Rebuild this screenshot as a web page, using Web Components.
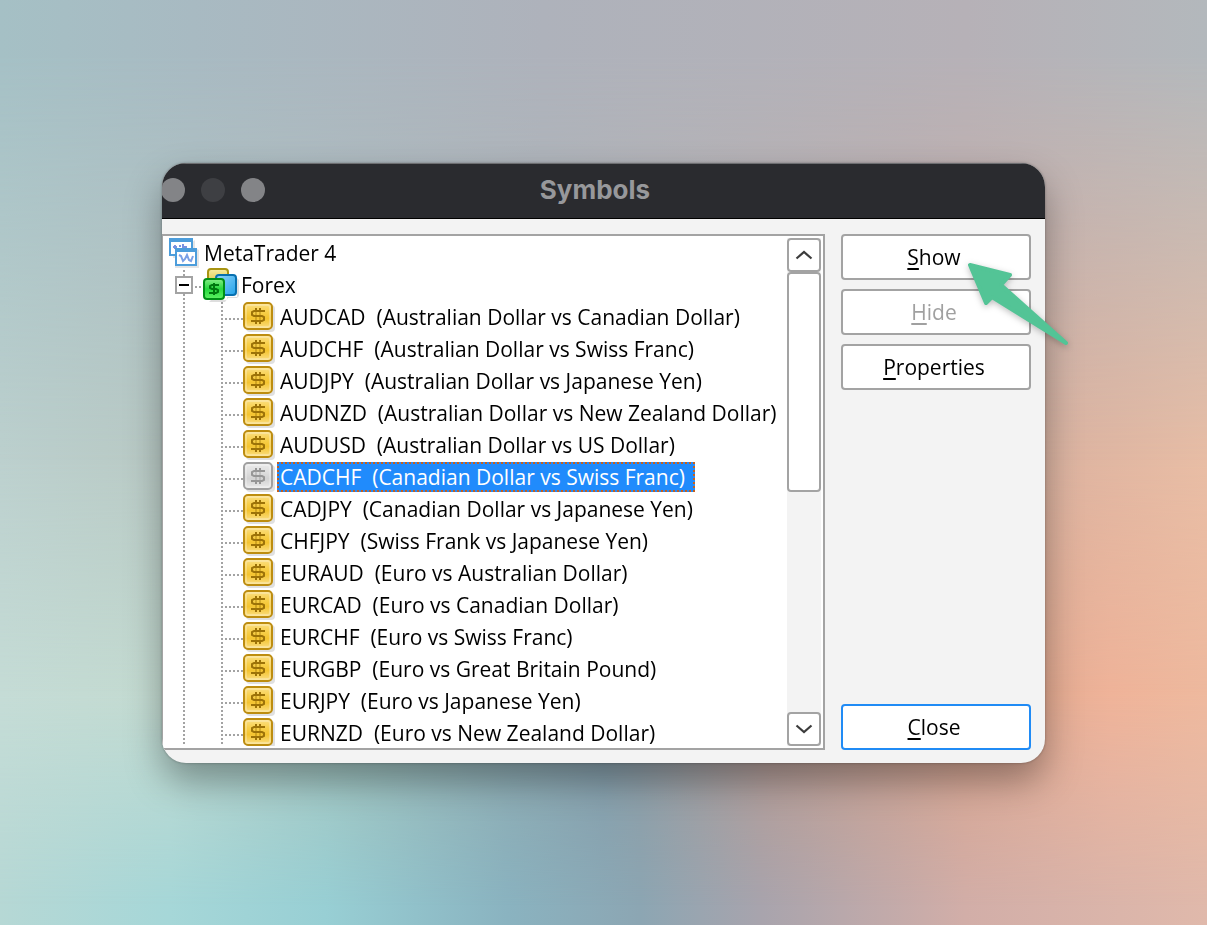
<!DOCTYPE html>
<html lang="en">
<head>
<meta charset="utf-8">
<title>Symbols</title>
<style>
    body
    {
        margin: 0;
        min-height: 100vh;
        display: flex;
        align-items: center;
        font-family: "Open Sans", "Noto Sans", sans-serif;
        font-size: 21px;
        color: #000;
    }
</style>
</head>
<body>

<soft-wallpaper></soft-wallpaper>

<symbols-window caption="Symbols">
    <symbol-tree slot="tree">
        <tree-row kind="root">MetaTrader 4</tree-row>
        <tree-row kind="group">Forex</tree-row>
        <tree-row>AUDCAD  (Australian Dollar vs Canadian Dollar)</tree-row>
        <tree-row>AUDCHF  (Australian Dollar vs Swiss Franc)</tree-row>
        <tree-row>AUDJPY  (Australian Dollar vs Japanese Yen)</tree-row>
        <tree-row>AUDNZD  (Australian Dollar vs New Zealand Dollar)</tree-row>
        <tree-row>AUDUSD  (Australian Dollar vs US Dollar)</tree-row>
        <tree-row selected>CADCHF  (Canadian Dollar vs Swiss Franc)</tree-row>
        <tree-row>CADJPY  (Canadian Dollar vs Japanese Yen)</tree-row>
        <tree-row>CHFJPY  (Swiss Frank vs Japanese Yen)</tree-row>
        <tree-row>EURAUD  (Euro vs Australian Dollar)</tree-row>
        <tree-row>EURCAD  (Euro vs Canadian Dollar)</tree-row>
        <tree-row>EURCHF  (Euro vs Swiss Franc)</tree-row>
        <tree-row>EURGBP  (Euro vs Great Britain Pound)</tree-row>
        <tree-row>EURJPY  (Euro vs Japanese Yen)</tree-row>
        <tree-row>EURNZD  (Euro vs New Zealand Dollar)</tree-row>
    </symbol-tree>
    <push-button slot="actions"><u>S</u>how</push-button>
    <push-button slot="actions" disabled><u>H</u>ide</push-button>
    <push-button slot="actions"><u>P</u>roperties</push-button>
    <push-button slot="footer" default><u>C</u>lose</push-button>
    <pointer-arrow slot="pointer"></pointer-arrow>
</symbols-window>

<script>
class SoftWallpaper extends HTMLElement
{
    constructor()
    {
        super();

        this.dom = this.attachShadow({mode: 'open'});

        // each band fades out into the one below it
        this.dom.innerHTML = `

            <style>

                :host
                {
                    display: grid;
                    position: fixed;
                    inset: 0;
                    z-index: -1;
                }

                div
                {
                    grid-area: 1 / 1;
                }

                .base
                {
                    background: linear-gradient(90deg, #b6d8d5, #a6d7d8 14%, #98cfd4 27%, #8ab3c0 42%, #8ca6b3 53%, #a8a4ad 63%, #d2aea8 80%, #e0b9ab);
                }

                .low
                {
                    background: linear-gradient(90deg, #c5dcd6, #c3dad0 14%, #a3bfb8 30%, #8399a5 50%, #b99a8e 64%, #d9a48c 80%, #efb399 92%, #eeb99e);
                    mask-image: linear-gradient(#000 75%, transparent 98%);
                }

                .middle
                {
                    background: linear-gradient(90deg, #bcd0ce, #b9cac5 13%, #b0b8b8 45%, #c9aea5 75%, #dfb5a1 90%, #e8bda5);
                    mask-image: linear-gradient(#000 50%, transparent 75%);
                }

                .top
                {
                    background: linear-gradient(90deg, #a5c0c5, #a8bac2 16%, #aeb2bb 45%, #b6b1b7 80%, #b3b8bc);
                    mask-image: linear-gradient(#000 6%, transparent 50%);
                }

            </style>

            <div class="base"></div>
            <div class="low"></div>
            <div class="middle"></div>
            <div class="top"></div>

            `;
    }
}

class SymbolsWindow extends HTMLElement
{
    constructor()
    {
        super();

        this.dom = this.attachShadow({mode: 'open'});

        this.dom.innerHTML = `

            <style>

                :host
                {
                    display: block;
                    position: relative;
                    flex: 1;
                    margin: 0 162px;
                }

                .frame
                {
                    border-radius: 24px;
                    overflow: hidden;
                    background: #f3f3f3;
                    box-shadow: 0 18px 36px rgba(0,0,0,.34), 0 0 3px rgba(0,0,0,.3);
                }

                header
                {
                    display: grid;
                    grid-template-columns: 1fr auto 1fr;
                    align-items: center;
                    box-sizing: border-box;
                    height: 56px;
                    padding: 0 17px 2px 0;
                    background: #2a2b2f;
                    border-top: 1px solid #6d6e71;
                    border-bottom: 1px solid #000;
                }

                .lights
                {
                    display: flex;
                    gap: 16px;
                    margin-left: -1px;
                }

                .lights button
                {
                    width: 24px;
                    height: 24px;
                    padding: 0;
                    border: 0;
                    border-radius: 50%;
                    background: #838487;
                }

                .lights button:disabled
                {
                    background: #3e3f43;
                }

                h1
                {
                    margin: 0;
                    font: 700 26px/32px Inter, sans-serif;
                    color: #97989b;
                }

                .body
                {
                    display: grid;
                    grid-template-columns: 1fr 190px;
                    gap: 16px;
                    padding: 15px 14px 13px 0;
                }

                .actions
                {
                    display: flex;
                    flex-direction: column;
                    gap: 9px;
                }

                .footer
                {
                    margin-top: auto;
                }

                ::slotted(pointer-arrow)
                {
                    position: absolute;
                    top: 96px;
                    right: -28px;
                }

            </style>

            <div class="frame">
                <header>
                    <div class="lights">
                        <button aria-label="Close window"></button>
                        <button aria-label="Minimize window" disabled></button>
                        <button aria-label="Zoom window"></button>
                    </div>
                    <h1></h1>
                </header>
                <div class="body">
                    <slot name="tree"></slot>
                    <div class="actions">
                        <slot name="actions"></slot>
                        <div class="footer"><slot name="footer"></slot></div>
                    </div>
                </div>
            </div>
            <slot name="pointer"></slot>

            `;

        this.dom.querySelector("h1").textContent = this.getAttribute("caption");
    }
}

class SymbolTree extends HTMLElement
{
    constructor()
    {
        super();

        this.dom = this.attachShadow({mode: 'open'});

        this.dom.innerHTML = `

            <style>

                :host
                {
                    display: grid;
                    grid-template-columns: 1fr 34px;
                    padding: 2px;
                    padding-left: 0;
                    border: 2px solid #a3a3a3;
                    border-left-width: 1px;
                    background: #fff;
                    min-width: 0;
                }

                .rows
                {
                    height: 508px;
                    overflow: hidden;
                }

                .bar
                {
                    display: flex;
                    flex-direction: column;
                    background: #f3f3f3;
                }

                .bar button, .thumb
                {
                    box-sizing: border-box;
                    border: 2px solid #a3a3a3;
                    border-radius: 4px;
                    background: #fff;
                }

                .bar button
                {
                    height: 34px;
                    padding: 0;
                    display: grid;
                    place-items: center;
                }

                .thumb
                {
                    height: 220px;
                }

                .down
                {
                    margin-top: auto;
                }

                path
                {
                    fill: none;
                    stroke: #3c3c3c;
                    stroke-width: 2.2;
                }

            </style>

            <div class="rows" role="tree"><slot></slot></div>
            <div class="bar">
                <button aria-label="Scroll up"><svg width="18" height="12"><path d="M1.5 9.5L9 3L16.5 9.5"/></svg></button>
                <div class="thumb"></div>
                <button class="down" aria-label="Scroll down"><svg width="18" height="12"><path d="M1.5 2.5L9 9L16.5 2.5"/></svg></button>
            </div>

            `;
    }
}

const coin = `
    <svg width="32" height="32" viewBox="0 0 32 32">
        <defs>
            <linearGradient id="face" x2="0" y2="1">
                <stop offset="0" stop-color="var(--hi)"/>
                <stop offset=".35" stop-color="var(--mid)"/>
                <stop offset=".6" stop-color="var(--low)"/>
                <stop offset="1" stop-color="var(--hi)"/>
            </linearGradient>
        </defs>
        <rect x="3" y="3" width="29" height="27" rx="4" fill="#000" opacity=".12"/>
        <rect x="1" y="1" width="28" height="26" rx="4" fill="url(#face)" stroke="var(--edge)" stroke-width="2"/>
        <rect x="3" y="3" width="24" height="22" rx="2" fill="none" stroke="#fff" stroke-width="2" opacity=".25"/>
        <g fill="none" stroke="var(--ink)" stroke-width="2">
            <path d="M13 8V20M17 8V20" opacity=".4"/>
            <path d="M13 6V9M17 6V9M13 19V22M17 19V22"/>
            <path d="M22 9H11L9 10V13L11 14H19L21 15V18L19 19H8"/>
        </g>
    </svg>`;

const folders = `
    <svg width="38" height="32" viewBox="0 2 38 32">
        <defs>
            <linearGradient id="yellow" x2="0" y2="1"><stop offset="0" stop-color="#f7eda0"/><stop offset="1" stop-color="#d5bd32"/></linearGradient>
            <linearGradient id="blue" x2="1" y2="1"><stop offset="0" stop-color="#93d5fa"/><stop offset="1" stop-color="#23a3ea"/></linearGradient>
            <linearGradient id="green" x2="0" y2="1"><stop offset="0" stop-color="#86ee86"/><stop offset=".5" stop-color="#27d83e"/><stop offset="1" stop-color="#5cf262"/></linearGradient>
        </defs>
        <path d="M8 32H24V29H34V10L36 12V28L34 30H25L22 34H6Z" fill="#000" opacity=".13"/>
        <rect x="5" y="1" width="20" height="18" rx="3" fill="url(#yellow)" stroke="#a89412" stroke-width="2"/>
        <rect x="13" y="7" width="20" height="20" rx="3" fill="url(#blue)" stroke="#0870af" stroke-width="2"/>
        <rect x="1" y="11" width="20" height="20" rx="3" fill="url(#green)" stroke="#008f16" stroke-width="2"/>
        <path d="M16 17H9L7 18V20L9 21H13L15 22V24L13 25H6M11 15V27" fill="none" stroke="#00780f" stroke-width="2"/>
    </svg>`;

const charts = `
    <svg width="30" height="30" viewBox="0 0 30 30">
        <path d="M4 18V20H6V30H30V12L26 10V2Z" fill="#000" opacity=".1"/>
        <rect x="1" y="1" width="22" height="16" fill="#fff" stroke="#4c9ddb" stroke-width="2"/>
        <path d="M0 2H24" stroke="#4c9ddb" stroke-width="4"/>
        <path d="M4 9H8M6 7V11M10 8H12M14 6V10M14 9H18" stroke="#7a92e0" stroke-width="2"/>
        <rect x="7" y="11" width="20" height="16" fill="#fff" stroke="#4c9ddb" stroke-width="2"/>
        <path d="M6 12H28" stroke="#4c9ddb" stroke-width="4"/>
        <path d="M10 17L12 18L14 23L16 21L18 17L20 22L22 23L24 18" fill="none" stroke="#7aa0e6" stroke-width="2"/>
    </svg>`;

class TreeRow extends HTMLElement
{
    constructor()
    {
        super();

        this.dom = this.attachShadow({mode: 'open'});

        this.dom.innerHTML = `

            <style>

                :host
                {
                    --line: #a3a3a3;
                    --edge: #bd8d10;
                    --ink: #9c7208;
                    --hi: #fbe088;
                    --mid: #f8cf4a;
                    --low: #f4c430;
                    --dots-x: repeating-linear-gradient(90deg, var(--line) 0 2px, transparent 2px 4px);
                    --dots-y: repeating-linear-gradient(var(--line) 0 2px, transparent 2px 4px);
                    display: flex;
                    height: 32px;
                    white-space: pre;
                }

                :host([selected])
                {
                    --edge: #a0a0a0;
                    --ink: #969696;
                    --hi: #ececec;
                    --mid: #dedede;
                    --low: #d2d2d2;
                }

                svg
                {
                    display: block;
                    flex: none;
                    overflow: visible;
                }

                .lines
                {
                    flex: none;
                    width: 80px;
                    background:
                        var(--dots-y) 20px 0 / 2px 100% no-repeat,
                        var(--dots-y) 58px 0 / 2px 100% no-repeat,
                        var(--dots-x) 62px 16px / 18px 2px no-repeat;
                }

                .lines.group
                {
                    width: 40px;
                    background:
                        var(--dots-y) 20px 0 / 2px 100% no-repeat,
                        var(--dots-x) 32px 16px / 8px 2px no-repeat;
                }

                .lines.root
                {
                    width: 6px;
                    background: none;
                }

                .lines button
                {
                    display: block;
                    box-sizing: border-box;
                    width: 18px;
                    height: 18px;
                    margin: 6px 0 0 12px;
                    padding: 0;
                    border: 2px solid var(--line);
                    background: linear-gradient(#000, #000) center / 10px 2px no-repeat #fff;
                }

                .label
                {
                    height: 30px;
                    line-height: 30px;
                    margin-left: 2px;
                    padding: 0 10px 0 3px;
                }

                .label.group
                {
                    margin-left: 0;
                    padding-left: 0;
                }

                :host([selected]) .label
                {
                    --mark: #c8601c;
                    --mark-x: repeating-linear-gradient(90deg, var(--mark) 0 2px, transparent 2px 4px);
                    --mark-y: repeating-linear-gradient(var(--mark) 0 2px, transparent 2px 4px);
                    color: #fff;
                    background:
                        var(--mark-x) top / 100% 2px no-repeat,
                        var(--mark-x) bottom / 100% 2px no-repeat,
                        var(--mark-y) left / 2px 100% no-repeat,
                        var(--mark-y) right / 2px 100% no-repeat,
                        #208bfc;
                }

            </style>

            <div class="lines"></div>
            <span class="label"><slot></slot></span>

            `;

        let kind = this.getAttribute("kind") || "symbol";
        let lines = this.dom.querySelector(".lines");
        let icons = { root: charts, group: folders, symbol: coin };

        lines.classList.add(kind);
        lines.insertAdjacentHTML("afterend", icons[kind]);
        this.dom.querySelector(".label").classList.add(kind);

        if (kind == "group")
        {
            lines.innerHTML = `<button aria-label="Collapse"></button>`;
        }

        this.setAttribute("role", "treeitem");
    }
}

class PushButton extends HTMLElement
{
    constructor()
    {
        super();

        this.dom = this.attachShadow({mode: 'open'});

        this.dom.innerHTML = `

            <style>

                :host
                {
                    display: block;
                }

                button
                {
                    display: block;
                    box-sizing: border-box;
                    width: 100%;
                    height: 46px;
                    padding: 0 4px 0 0;
                    border: 2px solid #a3a3a3;
                    border-radius: 4px;
                    background: #fff;
                    font: inherit;
                    color: #000;
                }

                button:disabled
                {
                    color: #a0a0a0;
                }

                :host([default]) button
                {
                    border-color: #208bf5;
                }

                ::slotted(u)
                {
                    text-decoration-thickness: 2px;
                    text-underline-offset: 3px;
                }

            </style>

            <button><slot></slot></button>

            `;

        this.dom.querySelector("button").disabled = this.hasAttribute("disabled");
    }
}

class PointerArrow extends HTMLElement
{
    constructor()
    {
        super();

        this.dom = this.attachShadow({mode: 'open'});

        this.dom.innerHTML = `

            <style>

                :host
                {
                    display: block;
                    pointer-events: none;
                }

                svg
                {
                    display: block;
                    filter: drop-shadow(0 2px 3px rgba(0,0,0,.25));
                }

            </style>

            <svg width="110" height="92" viewBox="0 0 110 92" aria-hidden="true">
                <path d="M7 6L47 16L38 26L103 84L29 38L23 44Z" fill="#53c496" stroke="#53c496" stroke-width="4" stroke-linejoin="round"/>
            </svg>

            `;
    }
}

customElements.define("soft-wallpaper", SoftWallpaper);
customElements.define("symbols-window", SymbolsWindow);
customElements.define("symbol-tree", SymbolTree);
customElements.define("tree-row", TreeRow);
customElements.define("push-button", PushButton);
customElements.define("pointer-arrow", PointerArrow);
</script>
</body>
</html>
